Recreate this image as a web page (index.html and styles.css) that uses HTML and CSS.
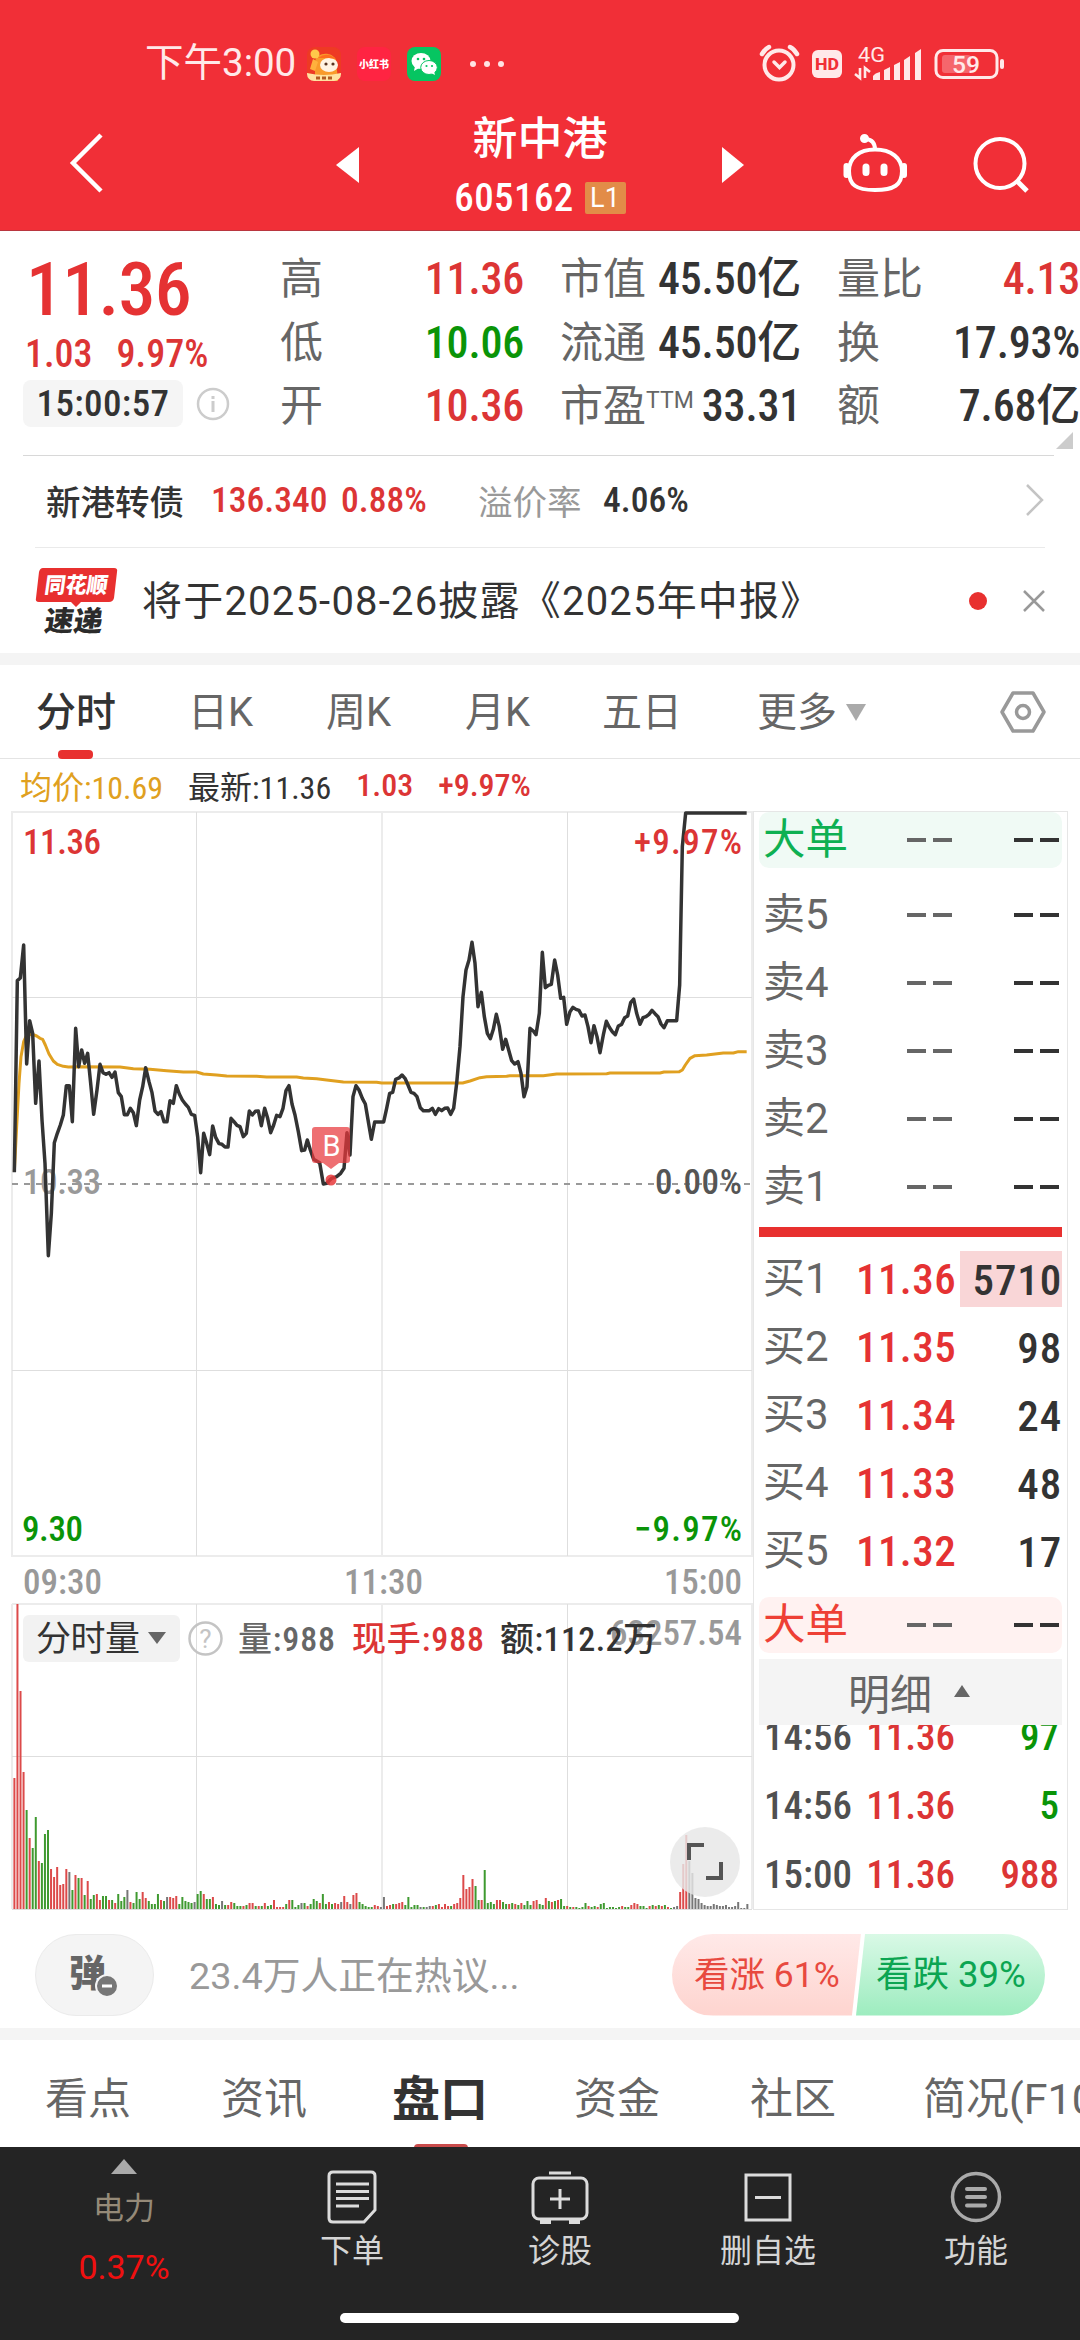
FILE: index.html
```html
<!DOCTYPE html>
<html lang="zh-CN">
<head>
<meta charset="utf-8">
<title>新中港 605162</title>
<link rel="stylesheet" href="styles.css">
</head>
<body>
<header class="top">
  <div class="status">
    <span class="clock">下午3:00</span>
    <svg class="app" viewBox="0 0 34 34"><rect width="34" height="34" rx="8" fill="#ee3a24"/><path d="M8 34V15C9 5 25 4 29 13L31 34Z" fill="#f99b2b"/><circle cx="8" cy="7" r="4.5" fill="#ffc94a"/><path d="M6 12l5 3-3 9-5-2z" fill="#ffb13d"/><ellipse cx="22" cy="18" rx="9" ry="7" fill="#fff3e3"/><circle cx="19" cy="17" r="1.6" fill="#5a3420"/><circle cx="26" cy="17" r="1.6" fill="#5a3420"/><path d="M11 11Q20 4 29 12L22 11Z" fill="#ff6d1e"/><path d="M0 26Q17 30 34 26V27A7 7 0 0 1 27 34H7A7 7 0 0 1 0 27Z" fill="#ffe2a0"/><path d="M9 31h4m2 0h4m2 0h4" stroke="#b35c22" stroke-width="3"/></svg>
    <span class="app redbook">小红书</span>
    <svg class="app" viewBox="0 0 34 34"><rect width="34" height="34" rx="8" fill="#06c561"/><ellipse cx="14" cy="14" rx="9.5" ry="8" fill="#fff"/><path d="M8 19l-1 5 5-3z" fill="#fff"/><ellipse cx="22" cy="20.500" rx="8.300" ry="7" fill="#fff" stroke="#06c561" stroke-width="1"/><path d="M24 26l4 2-1-4z" fill="#fff"/><g fill="#06c561"><circle cx="11" cy="12" r="1.300"/><circle cx="17" cy="12" r="1.300"/><circle cx="19.500" cy="19" r="1.100"/><circle cx="25" cy="19" r="1.100"/></g></svg>
    <svg class="dots" width="36" height="8" viewBox="0 0 36 8" fill="#ffe3e3"><circle cx="4" cy="4" r="3"/><circle cx="18" cy="4" r="3"/><circle cx="32" cy="4" r="3"/></svg>
    <svg class="signals" width="246" height="40" viewBox="759 44 246 40" fill="none" stroke="#ffe9e9">
      <circle cx="779" cy="65" r="14.500" stroke-width="4"/><path d="M762 54q3-5 7-7M797 54q-3-5-7-7" stroke-width="4.500" stroke-linecap="round"/><path d="M774 62l5.500 5.500L785 62" stroke-width="3.500" stroke-linecap="round"/>
      <rect x="812" y="50" width="30" height="28" rx="6" fill="#ffe9e9" stroke="none"/>
      <text x="815" y="69.500" font-size="16" font-weight="800" textLength="24" lengthAdjust="spacingAndGlyphs" fill="#f12f37" stroke="none">HD</text>
      <text x="858" y="62" font-size="20" textLength="27" lengthAdjust="spacingAndGlyphs" fill="#ffe9e9" stroke="none">4G</text>
      <path d="M860 68v10l-5-4M865 78v-10l5 4" stroke-width="2.600"/>
      <g fill="#ffe9e9" stroke="none"><path d="M873 80v-4q2-3 7-4v8zM884 80v-10l6-3v13zM894 80v-15l6-3v18zM904 80v-20l6-4v24zM915 80v-27l6-4v31z"/><rect x="1000" y="59" width="4" height="10" rx="2"/><rect x="942" y="55" width="29" height="18" rx="3" opacity=".3"/></g>
      <rect x="936" y="50.500" width="61" height="27" rx="7" stroke-width="3"/>
      <text x="952" y="73" font-size="24" font-weight="500" textLength="28" lengthAdjust="spacingAndGlyphs" fill="#ffe9e9" stroke="none">59</text>
    </svg>
  </div>
  <div class="nav">
    <svg class="back" width="36" height="62" viewBox="0 0 36 62"><path d="M32 3L4 31L32 59" fill="none" stroke="#fff" stroke-width="4.500"/></svg>
    <svg class="prev" width="24" height="36" viewBox="0 0 24 36"><path d="M23 0V36L0 18Z" fill="#fff"/></svg>
    <div class="title">
      <h1>新中港</h1>
      <p class="n">605162<b>L1</b></p>
    </div>
    <svg class="next" width="24" height="36" viewBox="0 0 24 36"><path d="M1 0V36L23 18Z" fill="#fff"/></svg>
    <svg class="robot" width="66" height="60" viewBox="843 133 66 60" fill="none" stroke="#fff" stroke-width="4"><path d="M875 149.500C859 149.500 849 158 849 171C849 185 856 190 875 190S902 185 902 171C902 158 891 149.500 875 149.500ZM875 149.500Q875 140 866 139"/><circle cx="864.500" cy="138.500" r="2.500" fill="#fff"/><path d="M846.500 166v9M904 166v9" stroke-width="6" stroke-linecap="round"/><path d="M866 167v5.500M884 167v5.500" stroke-width="7" stroke-linecap="round"/></svg>
    <svg class="search" width="58" height="58" viewBox="972 136 58 58" fill="none" stroke="#fff" stroke-width="4"><circle cx="1000" cy="163.500" r="24.500"/><path d="M1017 181l10 10" stroke-width="5"/></svg>
  </div>
</header>

<section class="quote n">
  <div class="price">
    <div class="last">11.36</div>
    <div class="chg"><span>1.03</span><span>9.97%</span></div>
    <div class="stamp"><span>15:00:57</span><svg width="34" height="34" viewBox="0 0 34 34"><circle cx="17" cy="17" r="15" fill="none" stroke="#ccc" stroke-width="2.500"/><path d="M17 14v11M17 9v3" stroke="#ccc" stroke-width="3"/></svg></div>
  </div>
  <dl class="c1"><dt>高</dt><dd class="r">11.36</dd><dt>低</dt><dd class="g">10.06</dd><dt>开</dt><dd class="r">10.36</dd></dl>
  <dl class="c2"><dt>市值</dt><dd>45.50亿</dd><dt>流通</dt><dd>45.50亿</dd><dt>市盈<sup>TTM</sup></dt><dd>33.31</dd></dl>
  <dl class="c3"><dt>量比</dt><dd class="r">4.13</dd><dt>换</dt><dd>17.93%</dd><dt>额</dt><dd>7.68亿</dd></dl>
  <i class="corner"></i>
</section>

<section class="bond">
  <span class="bname">新港转债</span><span class="n r bp">136.340</span><span class="n r bc">0.88%</span><span class="bl">溢价率</span><span class="n bv">4.06%</span>
  <svg width="20" height="34" viewBox="0 0 20 34"><path d="M2 2L17 17L2 32" fill="none" stroke="#c4c4c4" stroke-width="2.500"/></svg>
</section>

<section class="news">
  <svg class="logo" width="84" height="70" viewBox="35 565 84 70"><path d="M43 567H114Q118 567 117 571L114 597Q113 601 109 601H81L76 606L71 601H39Q35 601 36 597L39 571Q40 567 43 567Z" fill="#e8302f"/><g transform="skewX(-8)" font-weight="900"><text x="127" y="592" font-size="22" fill="#fff" textLength="63" lengthAdjust="spacingAndGlyphs">同花顺</text><text x="132" y="630" font-size="28" fill="#2b2b2b" textLength="58" lengthAdjust="spacingAndGlyphs">速递</text></g></svg>
  <span class="headline">将于2025-08-26披露《2025年中报》</span>
  <i class="reddot"></i>
  <svg width="22" height="22" viewBox="0 0 22 22"><path d="M1 1L21 21M21 1L1 21" stroke="#999" stroke-width="2.500"/></svg>
</section>

<nav class="periods">
  <span class="on">分时</span><span>日K</span><span>周K</span><span>月K</span><span>五日</span><span>更多<i></i></span>
  <svg width="46" height="44" viewBox="0 0 46 44" fill="none" stroke="#999" stroke-width="3.500"><path d="M13 3H33L44 22L33 41H13L2 22Z" stroke-linejoin="round"/><circle cx="23" cy="22" r="6.500"/></svg>
</nav>

<div class="summary n"><span class="avg">均价:10.69</span><span>最新:11.36</span><span class="r">1.03</span><span class="r">+9.97%</span></div>

<main class="board">
  <svg class="chart" width="753" height="1100" viewBox="0 811 753 1100">
    <g fill="none" stroke="#ececec" stroke-width="2">
      <rect x="12" y="812" width="740" height="744"/><path d="M12 1604H752V1909M12 1604V1909"/>
      <path d="M382 812V1556M382 1604V1909"/>
    </g>
    <path d="M196.500 812V1556M567.500 812V1556M196.500 1604V1909M567.500 1604V1909M12 997.500H752M12 1370.500H752M12 1756.500H752M12 1909.500H752" stroke="#dedede"/>
    <path d="M12 1184H752" stroke="#999" stroke-width="2" stroke-dasharray="6 6"/>
    <g class="n" font-size="35">
      <text x="23" y="1194" fill="#999" textLength="78">10.33</text>
    </g>
    <g transform="translate(0 800) scale(.33333)" fill="none" stroke-linejoin="round">
      <polyline stroke="#e0a020" stroke-width="9" points="43,1115 50,980 57,850 63,770 71,725 80,705 98,703 110,708 120,715 128,718 136,735 147,762 160,783 172,793 190,799 205,801 240,800 360,801 400,806 450,808 500,812 550,816 590,816 610,822 650,825 680,828 770,829 800,831 890,831 910,834 950,836 980,840 1030,846 1130,847 1145,849 1388,849 1410,843 1440,833 1460,830 1520,829 1530,827 1630,827 1670,822 1820,821 1830,819 1980,819 1992,816 2038,815 2047,810 2056,795 2070,775 2085,767 2120,765 2170,759 2200,759 2215,755 2240,755"/>
      <polyline stroke="#333" stroke-width="10.500" points="43,1117 52,542 61,534 71,435 80,792 89,662 98,700 107,910 117,783 126,960 135,1090 145,1367 154,1240 163,1028 172,1000 181,975 190,945 199,857 208,857 217,965 227,685 236,800 245,750 254,790 263,760 272,850 281,943 291,870 300,793 309,818 318,823 327,818 336,832 345,816 355,878 364,890 373,944 382,944 391,925 400,938 409,977 419,900 428,860 437,803 447,845 456,878 465,933 474,943 483,935 492,965 501,965 510,902 520,910 529,857 538,882 547,900 556,912 565,922 574,943 584,946 593,1010 602,1118 611,1000 620,1030 629,1064 638,978 647,1012 657,1031 666,1033 675,1041 684,1041 693,955 702,965 711,976 720,980 730,1010 739,1000 748,933 757,945 766,934 775,933 784,977 794,925 803,955 812,998 821,975 830,946 840,950 849,925 858,872 867,857 876,912 885,945 895,995 905,1052 914,1050 922,1020 931,1050 941,1078 950,1083 959,1088 970,1152 980,1150 995,1135 1010,1130 1022,1120 1032,1105 1041,998 1050,1065 1059,890 1068,857 1077,870 1087,895 1096,912 1105,965 1114,1018 1124,966 1133,966 1151,966 1160,925 1169,880 1178,877 1187,838 1197,834 1206,825 1215,835 1224,855 1233,877 1242,880 1251,890 1261,923 1270,932 1288,932 1297,925 1306,943 1316,926 1325,932 1334,925 1343,924 1352,943 1361,925 1370,850 1380,740 1389,590 1398,510 1407,480 1416,427 1425,490 1434,620 1444,577 1453,650 1462,700 1471,716 1480,688 1489,643 1498,680 1508,748 1517,718 1526,750 1535,782 1544,792 1554,785 1563,820 1572,890 1581,860 1590,685 1600,693 1608,704 1618,640 1627,457 1636,563 1645,556 1654,553 1664,480 1673,525 1682,595 1691,592 1700,673 1710,635 1719,622 1728,628 1737,631 1746,648 1755,645 1764,680 1773,728 1782,677 1791,710 1800,758 1810,705 1819,664 1828,682 1837,695 1846,704 1855,678 1865,673 1874,653 1883,648 1892,608 1901,597 1910,640 1920,673 1929,653 1938,650 1947,643 1956,631 1965,641 1974,650 1983,672 1992,683 2002,662 2030,662 2039,555 2047,140 2057,39 2240,39"/>
    </g>
    <g fill="#e8383b"><path opacity=".72" d="M315 1127H347Q350 1127 350 1130V1160Q350 1163 347 1163H339L331 1169L323 1163H315Q312 1163 312 1160V1130Q312 1127 315 1127Z"/><circle cx="331" cy="1180" r="5.500" opacity=".85"/></g>
    <text x="331.500" y="1155.500" font-size="29" fill="#fff" text-anchor="middle">B</text>
    <g class="n" font-size="35">
      <g fill="#dc3535"><text x="23" y="853.500" textLength="78">11.36</text><text x="634" y="853.500" textLength="108">+9.97%</text></g>
      <text x="655" y="1193.500" fill="#555" textLength="87">0.00%</text>
      <g fill="#0a9408"><text x="22" y="1541" textLength="61">9.30</text><text x="634" y="1541" textLength="108">−9.97%</text></g>
      <g fill="#999"><text x="23" y="1594" textLength="79">09:30</text><text x="344" y="1594" textLength="79">11:30</text><text x="664" y="1594" textLength="78">15:00</text><text x="610" y="1645" textLength="132">63257.54</text></g>
    </g>
    <g id="bars"></g>
    <rect x="23" y="1615" width="157" height="47" rx="6" fill="#f2f2f2"/>
    <text x="36" y="1651" font-size="35" fill="#333" textLength="104">分时量</text><path d="M148 1632H166L157 1644Z" fill="#666"/>
    <circle cx="205.500" cy="1638.500" r="16" fill="none" stroke="#c4c4c4" stroke-width="2.500"/><text x="205.500" y="1648" font-size="26" fill="#c4c4c4" text-anchor="middle">?</text>
    <g class="n" font-size="34"><text x="238" y="1651" fill="#666" textLength="97">量:988</text><text x="352" y="1651" fill="#dc3535" textLength="132">现手:988</text><text x="500" y="1651" fill="#333" textLength="157">额:112.2万</text></g>
    <circle cx="705" cy="1862" r="35" fill="#e6e6e6" opacity=".82"/>
    <path d="M689 1860V1845H704M721 1862V1878H706" fill="none" stroke="#555" stroke-width="4"/>
  </svg>

  <aside class="depth n">
    <div class="big sell"><em>大单</em><s></s><s></s></div>
    <div class="asks">
      <div><em>卖5</em><s></s><s></s></div><div><em>卖4</em><s></s><s></s></div><div><em>卖3</em><s></s><s></s></div><div><em>卖2</em><s></s><s></s></div><div><em>卖1</em><s></s><s></s></div>
    </div>
    <hr>
    <div class="bids">
      <div><em>买1</em><b>11.36</b><u class="hot">5710</u></div><div><em>买2</em><b>11.35</b><u>98</u></div><div><em>买3</em><b>11.34</b><u>24</u></div><div><em>买4</em><b>11.33</b><u>48</u></div><div><em>买5</em><b>11.32</b><u>17</u></div>
    </div>
    <div class="big buy"><em>大单</em><s></s><s></s></div>
    <div class="detail">明细<i></i></div>
    <div class="ticks">
      <div><span>14:56</span><b>11.36</b><u class="g">97</u></div><div><span>14:56</span><b>11.36</b><u class="g">5</u></div><div><span>15:00</span><b>11.36</b><u class="r">988</u></div>
    </div>
  </aside>
</main>

<section class="talk">
  <div class="danmu">弹<svg width="24" height="24" viewBox="0 0 24 24"><circle cx="12" cy="12" r="11" fill="#777" stroke="#f4f4f4" stroke-width="2"/><path d="M7 12h10" stroke="#fff" stroke-width="3"/></svg></div>
  <span class="hint">23.4万人正在热议...</span>
  <div class="vote"><span class="up">看涨 61%</span><span class="down">看跌 39%</span></div>
</section>

<nav class="tabs"><span>看点</span><span>资讯</span><span class="on">盘口</span><span>资金</span><span>社区</span><span>简况(F10)</span></nav>

<footer class="bottom">
  <div class="sector"><i></i><span>电力</span><b>0.37%</b></div>
  <div class="act"><svg width="50" height="54" viewBox="0 0 50 54" fill="none" stroke="#dcdcdc" stroke-width="3"><path d="M6 2H44Q48 2 48 6V40L37 52H6Q2 52 2 48V6Q2 2 6 2Z"/><path d="M9 14H42M9 21.500H42M9 28.500H42M9 36H32"/></svg><span>下单</span></div>
  <div class="act"><svg width="58" height="54" viewBox="0 0 58 54" fill="none" stroke="#dcdcdc" stroke-width="3"><rect x="2" y="8" width="54" height="41" rx="6"/><path d="M18 3H40M29 19V39M19 29H39"/><path d="M9 52H20M38 52H49" stroke-width="4"/></svg><span>诊股</span></div>
  <div class="act"><svg width="48" height="54" viewBox="0 0 48 54" fill="none" stroke="#dcdcdc" stroke-width="3"><rect x="2" y="5" width="44" height="45"/><path d="M11 27.500H37"/></svg><span>删自选</span></div>
  <div class="act"><svg width="52" height="54" viewBox="0 0 52 54" fill="none" stroke="#aaa"><circle cx="26" cy="27" r="23.500" stroke-width="3.500"/><path d="M17 19H35M17 27H35M17 35.500H35" stroke-width="4" stroke-linecap="round"/></svg><span>功能</span></div>
  <i class="home"></i>
</footer>
<script src="chart.js"></script>
</body>
</html>
```
FILE: chart.js
```
// Per-minute volume: bar height in pixels followed by r(ed), g(reen) or k (flat).
const volume = ("131r 305r 218r 137r 99g 71r 61g 92g 48r 46g 75g 79g 40r 32r 42r 24r 25r 40r 37k 19g 34r 31g 31r 14g 28r 10g 14g 15r 9r 13g 13g 9r 9g 6r 15g 8g 12g 19k 7r 6g 17g 10g 17r 11r 8g 5g 5g 15g 9r 8g 12k 12r 11r 13r 5g 12g 8g 7g 6g 7k " +
"15g 18g 15r 10g 10g 12r 5g 4g 8k 4g 4r 7r 6g 3g 3g 3r 4g 6r 6r 3g 3r 3g 6r 3g 4g 9r 2r 2r 2r 5g 9r 9g 2g 4g 6k 6g 3r 5g 10g 8g 6r 15g 5g 7r 5g 6r 5r 7k 13r 7r 5k 14r 16r 7g 5g 3g 2g 2g 4r 3r " +
"2k 12k 3r 4r 5g 5r 6r 7r 4g 12g 2g 4g 4g 2k 2g 2k 3k 3r 4g 5r 2r 5r 3r 3g 5r 6r 11r 34r 20r 22r 30r 23g 9g 9r 39g 6g 7g 5g 9r 9r 7g 5g 5r 6g 5r 4g 6r 4g 8g 4g 8r 9r 5g 4g 11r 8g 7r 8g 9r 10g " +
"3g 3r 2g 2r 2g 1g 2g 6g 3r 2g 3g 2r 5g 6g 1g 2g 2g 1g 2g 3r 2g 2g 4r 6r 5r 3g 3g 1g 3r 4g 3r 4g 3r 4g 2r 1g 2k 3k 17r 45r 74r 48k 36k 11k 10k 6k 4k 3k 3k 5k 4k 3k 3k 4k 2k 2k 3k 7k 1k 1k 5k").split(" ");
const tone = { r: "#dc4a4a", g: "#3f9a30", k: "#777" };
document.getElementById("bars").innerHTML = volume.map((v, i) => {
  const h = parseInt(v, 10);
  return `<rect x="${(13.4 + i * 3.054).toFixed(2)}" y="${1909 - h}" width="2" height="${h}" fill="${tone[v.slice(-1)]}"/>`;
}).join("");
```
FILE: styles.css
```css
* { box-sizing: border-box; margin: 0; padding: 0; }
body { width: 1080px; height: 2340px; overflow: hidden; background: #fff; color: #333; font-family: Roboto, "Noto Sans CJK SC", sans-serif; }
i, em { font-style: normal; }
u, s { text-decoration: none; }
svg { flex: none; display: block; }
span { white-space: nowrap; }
.n { font-family: "Roboto Condensed", "Noto Sans CJK SC", sans-serif; font-weight: 500; letter-spacing: 0; }
.r { color: #dc3535; }
.g { color: #0a9408; }

.top { height: 231px; background: #f12f37; color: #fff; border-bottom: 1px solid #b9363f; }
.status { height: 96px; padding: 32px 75px 0 145px; display: flex; align-items: center; }
.clock { width: 162px; font-size: 38.5px; line-height: 40px; margin-top: -3px; color: #ffe9e9; }
.app { width: 34px; height: 34px; margin-right: 16px; }
.redbook { border-radius: 8px; background: #ff2442; font: 900 10px/34px "Noto Sans CJK SC", sans-serif; text-align: center; }
.dots { margin-left: 12px; }
.signals { margin-left: auto; }
.nav { height: 134px; display: flex; align-items: flex-start; }
.back { margin: 36px 0 0 69px; }
.prev { margin: 51px 0 0 231px; }
.title { width: 200px; margin-left: 80px; text-align: center; }
.title h1 { font-size: 45px; font-weight: 500; line-height: 52px; margin-top: 18px; font-family: Roboto, "Noto Sans CJK SC", sans-serif; }
.title p { display: flex; justify-content: center; align-items: center; font-size: 39px; line-height: 36px; margin-top: 14px; letter-spacing: .01em; }
.title b { width: 41px; margin-left: 11px; background: #e28c48; font: 400 27px/32px Roboto, sans-serif; border-radius: 2px; }
.next { margin: 51px 0 0 81px; }
.robot { margin: 37px 0 0 98px; }
.search { margin: 40px 0 0 63px; }

.quote { position: relative; height: 225px; display: flex; padding: 17px 0 0 23px; }
.quote::after { content: ""; position: absolute; left: 23px; right: 26px; bottom: 0; height: 1px; background: #d8d8d8; }
.price { width: 257px; color: #e53233; }
.last { font-size: 74px; line-height: 84px; letter-spacing: -.01em; margin-left: 3px; }
.chg { display: flex; gap: 24px; font-size: 38px; line-height: 40px; margin-top: 2px; padding-left: 2px; color: #dc3535; }
.stamp { display: flex; align-items: center; gap: 13px; margin-top: 6px; }
.stamp span { width: 160px; height: 47px; border-radius: 8px; background: #f5f5f5; color: #333; font-size: 37px; line-height: 47px; text-align: center; letter-spacing: .01em; }
.quote dl { display: grid; grid-template-columns: auto 1fr; grid-auto-rows: 63.5px; line-height: 63px; font-size: 44px; }
.quote dt { font-weight: 400; color: #666; font-size: 43px; white-space: nowrap; }
.quote dd { text-align: right; white-space: nowrap; letter-spacing: -.005em; }
.quote sup { font-size: 23px; line-height: 1; vertical-align: 13px; font-family: Roboto, sans-serif; }
.c1 { width: 244px; }
.c2 { width: 241px; margin-left: 36px; }
.c2 dd { margin-left: -60px; }
.c3 { width: 243px; margin-left: 36px; }
.corner { position: absolute; right: 7px; bottom: 7px; border: solid transparent; border-width: 0 0 17px 17px; border-bottom-color: #ccc; }

.bond { display: flex; align-items: center; height: 92px; margin: 0 35px; border-bottom: 1px solid #eaeaea; font-size: 34.5px; padding: 0 0 4px 11px; }
.bond .n { font-size: 35.5px; }
.bname { width: 165px; font-weight: 500; }
.bp { width: 130px; }
.bc { width: 137px; }
.bl { width: 125px; color: #999; }
.bond svg { margin-left: auto; }

.news { display: flex; align-items: center; height: 105px; padding: 0 35px; }
.headline { flex: 1; margin: -5px 0 0 23px; font-size: 40px; letter-spacing: 1.2px; }
.reddot { width: 18px; height: 18px; border-radius: 9px; background: #e8302f; margin-right: 36px; }

.periods { display: flex; align-items: center; height: 106px; border-top: 12px solid #f4f4f4; border-bottom: 1px solid #e4e4e4; padding: 0 34px 0 36px; font-size: 40px; color: #666; }
.periods span { position: relative; top: -3px; }
.periods span:nth-child(1) { width: 152px; }
.periods span:nth-child(2) { width: 138px; }
.periods span:nth-child(3) { width: 139px; }
.periods span:nth-child(4) { width: 137px; }
.periods span:nth-child(5) { width: 155px; }
.periods .on { color: #333; font-weight: 500; }
.periods .on::after { content: ""; position: absolute; left: 22px; bottom: -21px; width: 35px; height: 9px; border-radius: 4px; background: #e8302f; }
.periods span i { display: inline-block; margin-left: 9px; vertical-align: 5px; border: solid transparent; border-width: 17px 10px 0; border-top-color: #aaa; }
.periods svg { margin-left: auto; }

.summary { display: flex; height: 52px; align-items: center; gap: 25px; padding-left: 20px; font-size: 32px; }
.summary span:nth-child(-n+2) { font-weight: 400; }
.avg { color: #e0a020; }

.board { display: flex; height: 1100px; }
.depth { width: 315px; height: 1099px; border: 1px solid #e6e6e6; padding: 0 5px; font-size: 43px; }
.depth div div, .big { display: flex; align-items: center; height: 68px; padding-left: 4px; }
.depth em { flex: 1; font-size: 42px; line-height: 50px; margin-top: -1px; color: #666; font-weight: 400; font-family: Roboto, "Noto Sans CJK SC", sans-serif; }
.depth .big { height: 56px; border-radius: 10px; }
.big.sell { background: #f0faf5; }
.big.buy { background: #fff2f1; }
.depth .big em { font-size: 42.5px; margin-top: -1px; }
.depth .sell em { color: #0eb052; }
.depth .buy em { color: #ee4035; }
.depth s { width: 45px; height: 4px; background: linear-gradient(90deg, #666 19px, transparent 19px 26px, #666 26px); margin-right: 62px; }
.depth s + s { margin-right: 3px; background: linear-gradient(90deg, #333 19px, transparent 19px 26px, #333 26px); }
.asks { padding-top: 13px; }
.depth hr { border: 0; height: 10px; margin-top: 6px; background: #e8302f; }
.bids { padding-top: 8px; }
.depth b, .depth u { font-weight: 500; }
.bids b { width: 98px; color: #e53233; text-align: right; letter-spacing: .01em; }
.bids u { width: 102px; margin-left: 6px; text-align: right; height: 56px; line-height: 58px; letter-spacing: .02em; }
.bids .hot { background: #f9d6d7; }
.depth .buy { margin-top: 12px; }
.detail { margin-top: 6px; height: 66px; background: #f4f4f4; display: flex; align-items: center; padding: 0 0 2px 89px; font-size: 42px; font-weight: 400; color: #666; }
.detail i { margin-left: 22px; border: solid transparent; border-width: 0 8px 12px; border-bottom-color: #666; }
.ticks { height: 181px; overflow: hidden; font-size: 39px; }
.depth .ticks div { height: 69px; padding-left: 5px; }
.ticks div:first-child { margin-top: -23px; }
.ticks span { width: 88px; color: #505050; }
.ticks b { width: 103px; text-align: right; color: #dc3535; }
.ticks u { flex: 1; text-align: right; padding-right: 3px; }

.talk { display: flex; align-items: center; height: 118px; padding: 11px 35px 0; margin-top: -1px; }
.danmu { position: relative; width: 119px; height: 82px; border-radius: 41px; border: 1px solid #ebebeb; background: #f4f4f4; font: 900 37px/73px "Noto Sans CJK SC", sans-serif; color: #666; padding-left: 33px; }
.danmu svg { position: absolute; left: 59px; top: 39px; }
.hint { margin: -4px 0 0 35px; font-size: 37.8px; color: #999; }
.vote { margin-left: auto; width: 373px; height: 82px; display: flex; border-radius: 41px; overflow: hidden; font-size: 35.5px; line-height: 82px; }
.up { width: 189px; padding-left: 22px; color: #e8493f; background: linear-gradient(#ffe9e8, #fed4cf); clip-path: polygon(0 0, 100% 0, 95.200% 100%, 0 100%); }
.down { flex: 1; padding-left: 20px; margin-left: -5px; font-size: 36.5px; color: #0ca552; background: linear-gradient(#d9f9e6, #9decbf); clip-path: polygon(4.800% 0, 100% 0, 100% 100%, 0 100%); }

.tabs { display: flex; height: 119px; align-items: center; border-top: 12px solid #f4f4f4; padding: 3px 0 0 45px; font-size: 43px; color: #666; overflow: hidden; }
.tabs span { position: relative; flex: none; width: 176px; }
.tabs span:nth-child(2) { width: 171px; }
.tabs span:nth-child(5) { width: 173px; }
.tabs .on { width: 182px; font-size: 48px; font-weight: 700; color: #333; }
.tabs .on::after { content: ""; position: absolute; left: 22px; bottom: -22px; width: 54px; height: 8px; border-radius: 4px 4px 0 0; background: #c94b4b; }

.bottom { position: relative; height: 193px; background: #242424; display: flex; color: #d5d5d5; font-size: 32px; padding-left: 59px; }
.sector { width: 130px; display: flex; flex-direction: column; align-items: center; color: #958a78; font-size: 31px; line-height: 36px; padding-top: 12px; }
.sector i { border: solid transparent; border-width: 0 13px 15px; border-bottom-color: #aaa; }
.sector span { margin-top: 17px; }
.sector b { font-weight: 400; font-size: 34px; color: #f01010; margin-top: 22px; }
.act { width: 208px; display: flex; flex-direction: column; align-items: center; padding-top: 23px; }
.act:nth-child(2) { margin-left: 59px; }
.act span { margin-top: 7px; line-height: 40px; }
.home { position: absolute; left: 340px; top: 166px; width: 399px; height: 10px; border-radius: 5px; background: #fff; }
```
